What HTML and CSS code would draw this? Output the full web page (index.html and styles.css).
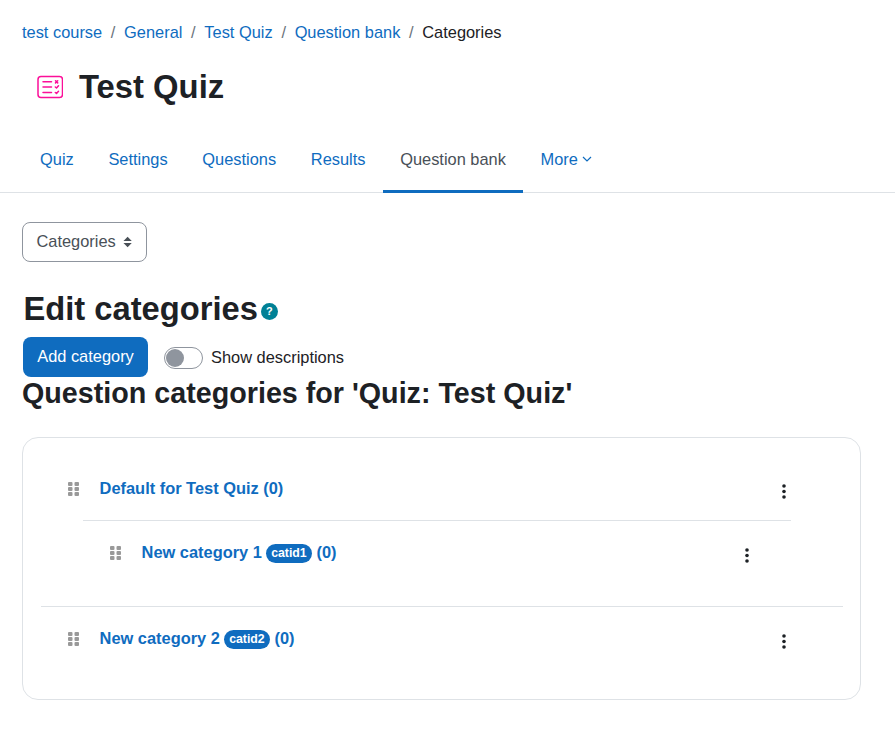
FILE: index.html
```html
<!DOCTYPE html>
<html lang="en">
<head>
<meta charset="utf-8">
<title>Categories</title>
<link rel="stylesheet" href="styles.css">
</head>
<body>
<header class="page-header">
  <nav class="breadcrumb">
    <a href="#">test course</a><span class="sep">/</span>
    <a href="#">General</a><span class="sep">/</span>
    <a href="#">Test Quiz</a><span class="sep">/</span>
    <a href="#">Question bank</a><span class="sep">/</span>
    <span>Categories</span>
  </nav>
  <div class="title-row">
    <svg class="quiz-icon" viewBox="0 0 26 24" width="26" height="24" fill="none" stroke="#fb0f99" stroke-width="1.5" stroke-linecap="round" stroke-linejoin="round">
      <rect x="1" y="1.500" width="24.500" height="21" rx="3"/>
      <path d="M6 6.700h8.500M6 12h8.500M6 17.500h8.500"/>
      <path d="M18.500 5.700l2.200 2.200M20.700 5.700L18.500 7.900"/>
      <path d="M18.300 12l1.200 1 2-2.200M18.300 17.500l1.200 1 2-2.200"/>
    </svg>
    <h1 class="page-title">Test Quiz</h1>
  </div>
</header>
<nav class="tabs">
  <a class="tab" href="#">Quiz</a>
  <a class="tab" href="#">Settings</a>
  <a class="tab" href="#">Questions</a>
  <a class="tab" href="#">Results</a>
  <a class="tab tab-active" href="#">Question bank</a>
  <a class="tab" href="#">More
    <svg class="chevron" viewBox="0 0 10 6" width="10" height="6" fill="none" stroke="#0f6cbf" stroke-width="1.200"><path d="M1 1l4 4 4-4"/></svg>
  </a>
</nav>
<main class="content">
  <div class="select">
    <span>Categories</span>
    <svg class="updown" viewBox="0 0 10 12" width="10" height="12" fill="#495057"><path d="M5 .2L9.500 5H.5zM5 11.800L.5 7h9z"/></svg>
  </div>
  <div class="edit-heading">
    <h2 class="edit-title">Edit categories</h2>
    <span class="help">?</span>
  </div>
  <div class="actions">
    <a class="btn" href="#">Add category</a>
    <span class="switch"><span class="knob"></span></span>
    <span class="switch-label">Show descriptions</span>
  </div>
  <h3 class="sub-title">Question categories for 'Quiz: Test Quiz'</h3>
  <section class="card">
    <div class="row row-top">
      <svg class="grip" viewBox="0 0 11 14" width="11" height="14" fill="#999"><rect width="4.500" height="4" rx="1"/><rect x="6.500" width="4.500" height="4" rx="1"/><rect y="5" width="4.500" height="4" rx="1"/><rect x="6.500" y="5" width="4.500" height="4" rx="1"/><rect y="10" width="4.500" height="4" rx="1"/><rect x="6.500" y="10" width="4.500" height="4" rx="1"/></svg>
      <a class="cat" href="#">Default for Test Quiz (0)</a>
      <svg class="kebab" viewBox="0 0 4 15" width="4" height="15" fill="#1d2125"><circle cx="2" cy="2" r="1.800"/><circle cx="2" cy="7.500" r="1.800"/><circle cx="2" cy="13" r="1.800"/></svg>
    </div>
    <div class="nested">
      <div class="row row-child">
        <svg class="grip" viewBox="0 0 11 14" width="11" height="14" fill="#999"><rect width="4.500" height="4" rx="1"/><rect x="6.500" width="4.500" height="4" rx="1"/><rect y="5" width="4.500" height="4" rx="1"/><rect x="6.500" y="5" width="4.500" height="4" rx="1"/><rect y="10" width="4.500" height="4" rx="1"/><rect x="6.500" y="10" width="4.500" height="4" rx="1"/></svg>
        <a class="cat" href="#">New category 1 <span class="badge">catid1</span> (0)</a>
        <svg class="kebab" viewBox="0 0 4 15" width="4" height="15" fill="#1d2125"><circle cx="2" cy="2" r="1.800"/><circle cx="2" cy="7.500" r="1.800"/><circle cx="2" cy="13" r="1.800"/></svg>
      </div>
    </div>
    <div class="row row-last">
      <svg class="grip" viewBox="0 0 11 14" width="11" height="14" fill="#999"><rect width="4.500" height="4" rx="1"/><rect x="6.500" width="4.500" height="4" rx="1"/><rect y="5" width="4.500" height="4" rx="1"/><rect x="6.500" y="5" width="4.500" height="4" rx="1"/><rect y="10" width="4.500" height="4" rx="1"/><rect x="6.500" y="10" width="4.500" height="4" rx="1"/></svg>
      <a class="cat" href="#">New category 2 <span class="badge">catid2</span> (0)</a>
      <svg class="kebab" viewBox="0 0 4 15" width="4" height="15" fill="#1d2125"><circle cx="2" cy="2" r="1.800"/><circle cx="2" cy="7.500" r="1.800"/><circle cx="2" cy="13" r="1.800"/></svg>
    </div>
  </section>
</main>
</body>
</html>
```
FILE: styles.css
```css
* { box-sizing: border-box; }
html, body { margin: 0; padding: 0; }
body {
  font-family: "Liberation Sans", Arial, sans-serif;
  font-size: 16.400px;
  line-height: 24px;
  color: #1d2125;
  background: #fff;
}
a { color: #0f6cbf; text-decoration: none; }
.page-header { padding: 21px 22px 0; }
.breadcrumb { display: flex; height: 24px; align-items: center; padding-bottom: 2px; }
.sep { color: #6a737b; padding: 0 8.700px; }
.title-row { display: flex; align-items: center; padding: 22px 0 0 15px; height: 62px; }
.quiz-icon { flex: none; margin-right: 16px; }
.page-title { margin: 0; font-size: 32.800px; line-height: 40px; font-weight: 700; }
.tabs { display: flex; margin-top: 20px; padding-left: 22.700px; height: 66px; border-bottom: 1px solid #dee2e6; }
.tab { display: flex; align-items: center; gap: 4px; padding: 0 17.350px 2px; height: 65px; }
.tab-active { color: #495057; border-bottom: 3px solid #0f6cbf; height: 66px; padding-bottom: 0; }
.chevron { margin-top: 1px; }
.content { padding: 29px 22px 0; }
.select {
  display: inline-flex; align-items: center; gap: 7.500px;
  width: 125px; height: 40px; padding: 0 13.500px 2px;
  border: 1px solid #8f959e; border-radius: 8px; color: #495057;
}
.updown { margin-top: 2px; }
.edit-heading { display: flex; align-items: center; margin-top: 27px; padding-left: 1.500px; height: 40px; }
.edit-title { margin: 0; font-size: 32.700px; line-height: 40px; font-weight: 700; }
.help {
  width: 17px; height: 17px; border-radius: 50%; margin: 5px 0 0 3px;
  background: #008196; color: #fff; font-size: 11px; line-height: 17px; font-weight: 700; text-align: center;
}
.actions { display: flex; align-items: center; margin-top: 8px; height: 40px; }
.btn {
  display: flex; align-items: center; justify-content: center;
  width: 125px; height: 40px; margin-left: 1px; padding-bottom: 2px; border-radius: 8px; background: #0f6cbf; color: #fff;
}
.switch { width: 39px; height: 22px; margin: 2px 8px 0 16px; border: 1px solid #8f959e; border-radius: 11px; padding: 1px; display: block; }
.knob { display: block; width: 18px; height: 18px; border-radius: 50%; background: #8f959e; }
.switch-label { line-height: 22px; }
.sub-title { margin: 0; font-size: 28.700px; line-height: 32px; font-weight: 700; }
.card {
  margin-top: 28px; width: 839px; height: 263px;
  border: 1px solid #dee2e6; border-radius: 16px; padding: 38px 17px 0 18px;
}
.row { display: flex; align-items: flex-start; padding-left: 27px; }
.grip { flex: none; margin: 6px 20.600px 0 0; }
.cat { font-weight: 700; }
.kebab { flex: none; margin: 8px 0 0 auto; }
.row-top { padding-right: 57px; padding-bottom: 20px; }
.nested { margin: 0 52px 0 42px; border-top: 1px solid #dee2e6; height: 86px; }
.row-child { padding-top: 19px; padding-right: 42px; }
.row-last { padding-top: 19px; padding-right: 57px; border-top: 1px solid #dee2e6; }
.badge {
  display: inline-block; height: 19px; padding: 0 5.250px; margin-left: -0.500px; border-radius: 10px;
  background: #0f6cbf; color: #fff; font-size: 12.300px; line-height: 19px; font-weight: 700; vertical-align: 1px;
}
```
